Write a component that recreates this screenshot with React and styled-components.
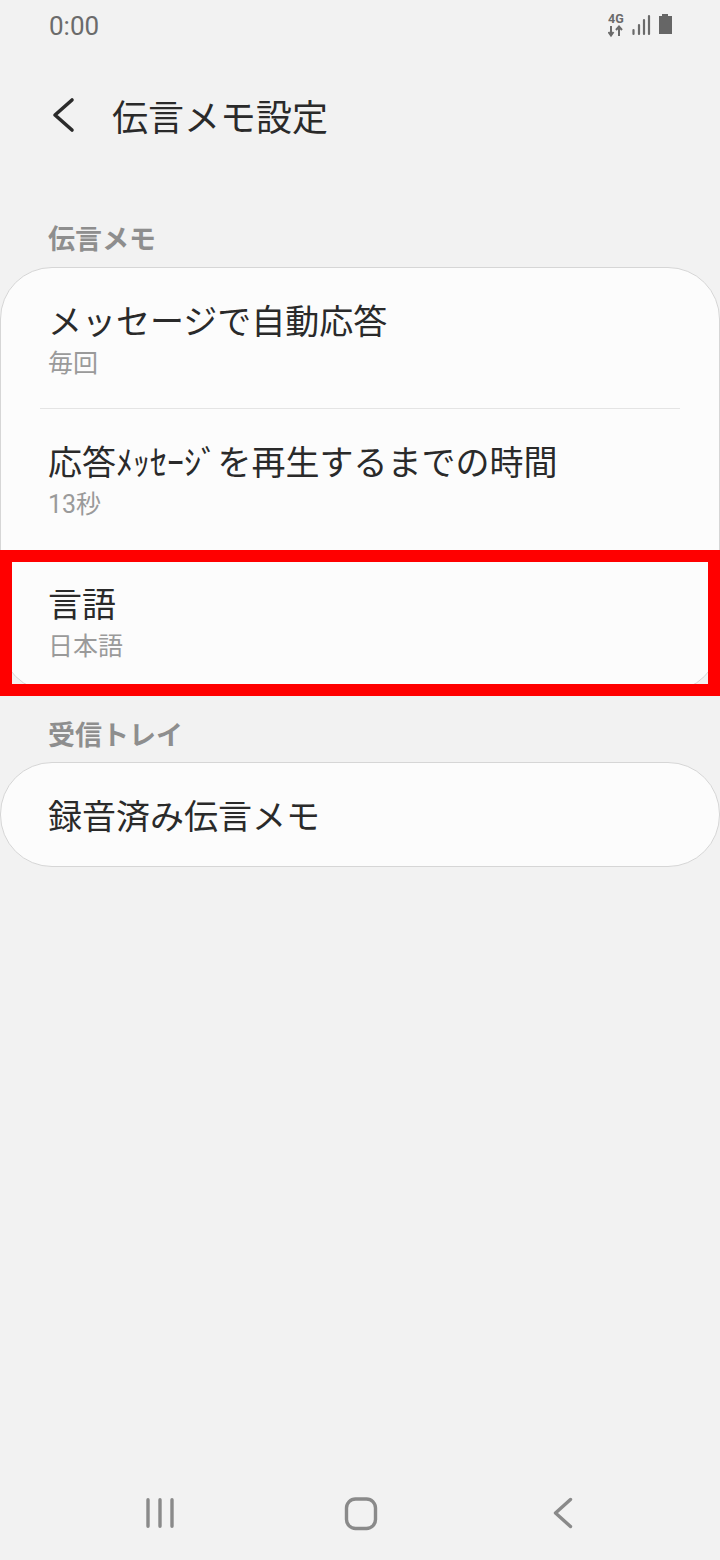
import React from "react";
import styled, { createGlobalStyle } from "styled-components";

const Global = createGlobalStyle`
  html, body { margin: 0; padding: 0; background: #f2f2f2; }
  body { font-family: "Roboto", "Noto Sans CJK JP", sans-serif; }
`;

const Screen = styled.div`
  position: relative;
  width: 720px;
  height: 1560px;
  background: #f2f2f2;
  display: flex;
  flex-direction: column;
  overflow: hidden;
`;

const StatusBar = styled.div`
  height: 50px;
  box-sizing: border-box;
  padding: 0 46px 0 49px;
  display: flex;
  align-items: center;
  justify-content: space-between;
  color: #6b6b6b;
  font-size: 26px;
`;

const Clock = styled.span`
  padding-top: 2px;
`;

const Header = styled.div`
  height: 130px;
  display: flex;
  align-items: center;
  padding-left: 48px;
  gap: 34px;
`;

const Title = styled.div`
  font-family: "Noto Sans CJK JP", sans-serif;
  font-size: 36px;
  color: #2a2a2a;
`;

const SectionLabel = styled.div`
  font-family: "Noto Sans CJK JP", sans-serif;
  font-weight: 700;
  font-size: 27px;
  line-height: 40px;
  color: #8e8e8e;
  padding-left: 48px;
  margin-top: ${(p) => p.$top}px;
  margin-bottom: ${(p) => p.$bottom}px;
`;

const Card = styled.div`
  background: #fcfcfc;
  border: 1px solid #d6d6d6;
  border-radius: 52px;
  display: flex;
  flex-direction: column;
`;

const Row = styled.div`
  height: ${(p) => p.$height}px;
  box-sizing: border-box;
  margin: 0 39px;
  padding: 0 8px ${(p) => p.$lift ?? 2}px;
  display: flex;
  flex-direction: column;
  justify-content: center;
  border-bottom: ${(p) => (p.$divider ? "1px solid #e4e4e4" : "none")};
`;

const RowTitle = styled.div`
  font-family: "Noto Sans CJK JP", sans-serif;
  font-size: 34px;
  line-height: 46px;
  word-spacing: -8px;
  color: #2a2a2a;
  white-space: pre;
`;

const RowSub = styled.div`
  font-family: "Roboto", "Noto Sans CJK JP", sans-serif;
  font-size: 25px;
  line-height: 34px;
  margin-top: 4px;
  margin-bottom: -4px;
  color: #9a9a9a;
`;

const Highlight = styled.div`
  position: absolute;
  left: 0;
  top: 550px;
  width: 720px;
  height: 146px;
  box-sizing: border-box;
  border: 12px solid #ff0000;
`;

const NavBar = styled.div`
  margin-top: auto;
  height: 96px;
  box-sizing: border-box;
  padding: 33px 0 0 144px;
  display: grid;
  grid-template-columns: 200px 208px 24px;
  align-items: start;
`;

const StatusIcons = () => (
  <svg width="66" height="26" viewBox="0 0 66 26">
    <text x="0" y="11" fontFamily="Roboto, sans-serif" fontWeight="700" fontSize="12.500" fill="#6b6b6b">4G</text>
    <path d="M3 14v9M0.500 20l2.500 3.500L5.500 20M11 24v-9M8 18l3-3.500 3 3.500" fill="none" stroke="#6b6b6b" strokeWidth="2" />
    <path d="M25.500 18v4M31 13v9M36 8v14M41 4v18" stroke="#6b6b6b" strokeWidth="2.200" strokeLinecap="round" fill="none" />
    <path d="M51 4h3V2h6v2h4v18H51z" fill="#666" />
  </svg>
);

const BackIcon = () => (
  <svg width="30" height="40" viewBox="0 0 30 40">
    <path d="M24 5 L7 20 L24 35" fill="none" stroke="#2b2b2b" strokeWidth="3.600" strokeLinecap="round" strokeLinejoin="round" />
  </svg>
);

export default function App() {
  return (
    <Screen>
      <Global />
      <StatusBar>
        <Clock>0:00</Clock>
        <StatusIcons />
      </StatusBar>
      <Header>
        <BackIcon />
        <Title>伝言メモ設定</Title>
      </Header>
      <SectionLabel $top={38} $bottom={9}>伝言メモ</SectionLabel>
      <Card>
        <Row $height={141} $divider>
          <RowTitle>メッセージで自動応答</RowTitle>
          <RowSub>毎回</RowSub>
        </Row>
        <Row $height={141} $lift={3}>
          <RowTitle>応答ﾒｯｾｰｼﾞ を再生するまでの時間</RowTitle>
          <RowSub>13秒</RowSub>
        </Row>
        <Row $height={141}>
          <RowTitle>言語</RowTitle>
          <RowSub>日本語</RowSub>
        </Row>
      </Card>
      <SectionLabel $top={22} $bottom={8}>受信トレイ</SectionLabel>
      <Card>
        <Row $height={103} $lift={0}>
          <RowTitle>録音済み伝言メモ</RowTitle>
        </Row>
      </Card>
      <Highlight />
      <NavBar>
        <svg width="32" height="32" viewBox="0 0 32 32">
          <path d="M4 2.700v26.600M16 2.700v26.600M28 2.700v26.600" stroke="#8a8a8a" strokeWidth="3.400" strokeLinecap="round" fill="none" />
        </svg>
        <svg width="34" height="34" viewBox="0 0 34 34">
          <rect x="2.500" y="2" width="29" height="29.500" rx="9" fill="none" stroke="#8a8a8a" strokeWidth="3.400" />
        </svg>
        <svg width="24" height="32" viewBox="0 0 24 32">
          <path d="M18.500 2.500 L3.500 16 L18.500 29.500" fill="none" stroke="#8a8a8a" strokeWidth="3.400" strokeLinecap="round" strokeLinejoin="round" />
        </svg>
      </NavBar>
    </Screen>
  );
}
